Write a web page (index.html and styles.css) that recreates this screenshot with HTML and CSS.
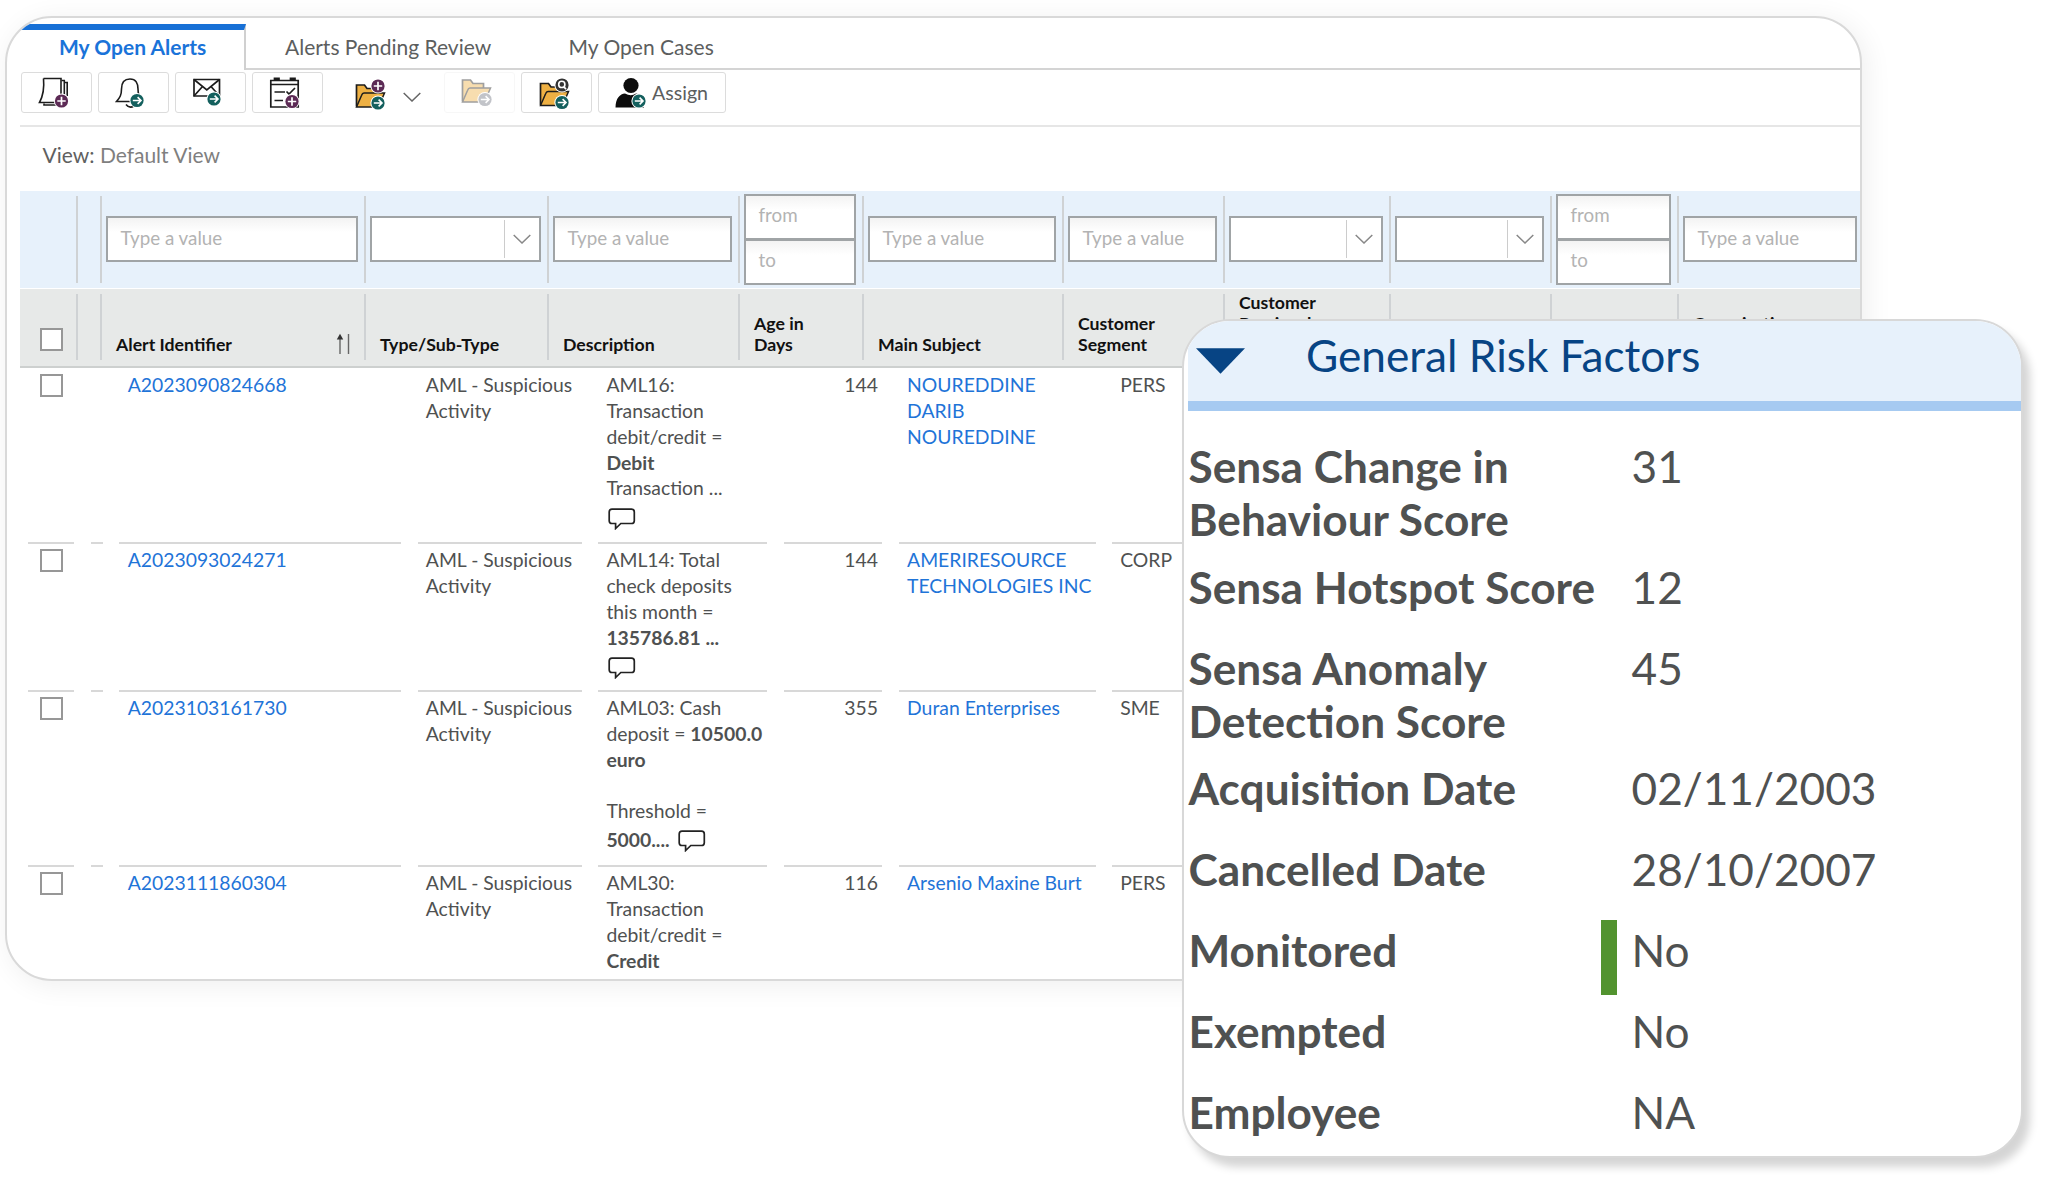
FILE: index.html
```html
<!DOCTYPE html>
<html lang="en">
<head>
<meta charset="utf-8">
<title>My Open Alerts</title>
<link rel="stylesheet" href="styles.css">
</head>
<body>
<svg class="defs" width="0" height="0" aria-hidden="true">
  <defs>
    <g id="badge-plus"><circle r="7.6" fill="#fff"/><circle r="6.6" fill="#5c2a55"/><path d="M-4.2 0H4.2M0-4.2V4.2" stroke="#fff" stroke-width="1.7"/></g>
    <g id="badge-arrow"><circle r="7.6" fill="#fff"/><circle r="6.6" fill="#14605e"/><path d="M-4.2 0H3.8M.6-3.4 4 0 .6 3.4" fill="none" stroke="#fff" stroke-width="1.6"/></g>
    <g id="badge-search"><circle r="7.6" fill="#fff"/><circle r="6.6" fill="#333"/><circle cx="-.2" cy="-.6" r="3.1" fill="none" stroke="#fff" stroke-width="1.6"/><path d="M1.8 1.6 4 4.2" stroke="#fff" stroke-width="1.7"/></g>
    <g id="folder"><path d="M1.5 23.5V2H9.5l2.5 3.5H22.5V10" fill="#eeb043" stroke="#1c1c1c" stroke-width="1.7"/><path d="M1.5 24 6.5 12.5C7 11 7.5 10 9 10H29.5L23.5 24Z" fill="#eeb043" stroke="#1c1c1c" stroke-width="1.5"/></g>
    <g id="bubble"><path d="M4 1.2H23.5Q26.3 1.2 26.3 4V12.7Q26.3 15.5 23.5 15.5H12.8L7.6 20.5V15.5H4Q1.2 15.5 1.2 12.7V4Q1.2 1.2 4 1.2Z" fill="#fff" stroke="#222" stroke-width="1.7"/></g>
  </defs>
</svg>

<main class="card">
  <nav class="tabs">
    <a class="tab tab-active">My Open Alerts</a>
    <a class="tab tab-review">Alerts Pending Review</a>
    <a class="tab tab-cases">My Open Cases</a>
  </nav>

  <div class="toolbar">
    <button class="tool"><svg class="ico" viewBox="0 0 34 34"><g fill="none" stroke="#1c1c1c" stroke-width="1.6"><path d="M5.5 2.5H23V22M5.5 2.5C6.5 13 5 20 1.5 26.5H17"/><path d="M23.5 4.5H26.3V19M26.5 6.5H29.2V20M6 27.5V29H18"/></g><use href="#badge-plus" x="23.5" y="25"/></svg></button>
    <button class="tool"><svg class="ico" viewBox="0 0 34 34"><g fill="none" stroke="#1c1c1c" stroke-width="1.6"><path d="M15 3C9 3 6.5 7.5 6.5 13 6.5 19 5 21.5 1.5 25.5H27C23.5 21 23 18 23 13 23 7.5 21 3 15 3Z"/><path d="M11 28.5Q14.5 33 19 30"/></g><use href="#badge-arrow" x="22" y="24.5"/></svg></button>
    <button class="tool"><svg class="ico" viewBox="0 0 34 34"><g fill="none" stroke="#1c1c1c" stroke-width="1.7"><path d="M2 3.5H27.5V20H2Z"/><path d="M2 3.5 14.8 14 27.5 3.5M2 20 10.5 10.5M27.5 20 19 10.5"/></g><use href="#badge-arrow" x="22" y="23"/></svg></button>
    <button class="tool"><svg class="ico" viewBox="0 0 34 34"><g fill="none" stroke="#1c1c1c" stroke-width="1.7"><path d="M1.8 4.5H29.2V31H1.8ZM1.8 8.5H29.2"/><path d="M5.5 4.5V2.3H10V4.5M21.5 4.5V2.3H26V4.5" fill="#1c1c1c"/><path d="M5.5 16H16M5.5 24.5H14M17.5 15.5 20 18 26 12"/></g><use href="#badge-plus" x="23" y="25.5"/></svg></button>
    <button class="tool tool-split"><svg class="ico" viewBox="0 0 34 34"><use href="#folder" x="1" y="7"/><use href="#badge-plus" x="24" y="10"/><use href="#badge-arrow" x="24" y="27"/></svg><svg class="chev" viewBox="0 0 18 10"><path d="M.7 1 9 9 17.3 1" fill="none" stroke="#666" stroke-width="1.5"/></svg></button>
    <button class="tool tool-off"><svg class="ico" viewBox="0 0 34 34"><use href="#folder" x="0" y="2"/><circle cx="24" cy="23.5" r="7.6" fill="#fff"/><circle cx="24" cy="23.5" r="6.6" fill="#6f7480"/><path d="M19.8 23.5H27.8M24.6 20.1 28 23.5 24.6 26.9" fill="none" stroke="#fff" stroke-width="1.6"/></svg></button>
    <button class="tool"><svg class="ico" viewBox="0 0 34 34"><use href="#folder" x="1" y="5.5"/><use href="#badge-search" x="24" y="9"/><use href="#badge-arrow" x="24" y="26.5"/></svg></button>
    <button class="tool tool-assign"><svg class="ico" viewBox="0 0 34 34"><circle cx="17" cy="9.5" r="7.6" fill="#0c0c0c"/><path d="M1.5 31.5C1.5 22 6 18 11 17.5Q17 21 22 17.5C27 18 30 23 30 31.5Z" fill="#0c0c0c"/><use href="#badge-arrow" x="25" y="25"/></svg><span class="tool-label">Assign</span></button>
  </div>

  <div class="viewbar"><span class="view-key">View:</span> Default View</div>

  <div class="grid">
    <div class="cols filters">
      <div class="cell"></div><div class="cell"></div>
      <div class="cell"><div class="field">Type a value</div></div>
      <div class="cell"><div class="pick"><svg class="chev" viewBox="0 0 18 10"><path d="M.7 1 9 9 17.3 1" fill="none" stroke="#888" stroke-width="1.5"/></svg></div></div>
      <div class="cell"><div class="field">Type a value</div></div>
      <div class="cell range"><div class="field">from</div><div class="field">to</div></div>
      <div class="cell"><div class="field">Type a value</div></div>
      <div class="cell"><div class="field">Type a value</div></div>
      <div class="cell"><div class="pick"><svg class="chev" viewBox="0 0 18 10"><path d="M.7 1 9 9 17.3 1" fill="none" stroke="#888" stroke-width="1.5"/></svg></div></div>
      <div class="cell"><div class="pick"><svg class="chev" viewBox="0 0 18 10"><path d="M.7 1 9 9 17.3 1" fill="none" stroke="#888" stroke-width="1.5"/></svg></div></div>
      <div class="cell range"><div class="field">from</div><div class="field">to</div></div>
      <div class="cell"><div class="field">Type a value</div></div>
    </div>
    <div class="cols heads">
      <div class="cell"><i class="box"></i></div><div class="cell"></div>
      <div class="cell sorted">Alert Identifier<svg class="sort" viewBox="0 0 14 22"><path d="M4 21V4M12.5 1V21" fill="none" stroke="#666" stroke-width="1.4"/><path d="M.8 6.5 4 .8 7.2 6.5Z" fill="#333"/></svg></div>
      <div class="cell">Type/Sub-Type</div>
      <div class="cell">Description</div>
      <div class="cell">Age in<br>Days</div>
      <div class="cell">Main Subject</div>
      <div class="cell">Customer<br>Segment</div>
      <div class="cell">Customer<br>Previously<br>Alerted</div>
      <div class="cell"></div>
      <div class="cell"></div>
      <div class="cell">Organisation<br>Unit</div>
    </div>

    <div class="row r1">
      <div><i class="box"></i></div><div></div>
      <div class="link">A2023090824668</div>
      <div>AML - Suspicious<br>Activity</div>
      <div>AML16:<br>Transaction<br>debit/credit =<br><b>Debit</b><br>Transaction ...<svg class="bubble below" viewBox="0 0 28 22"><use href="#bubble"/></svg></div>
      <div class="num">144</div>
      <div class="link">NOUREDDINE<br>DARIB<br>NOUREDDINE</div>
      <div>PERS</div>
    </div>
    <div class="row r2">
      <div><i class="box"></i></div><div></div>
      <div class="link">A2023093024271</div>
      <div>AML - Suspicious<br>Activity</div>
      <div>AML14: Total<br>check deposits<br>this month =<br><b>135786.81 ...</b><svg class="bubble below" viewBox="0 0 28 22"><use href="#bubble"/></svg></div>
      <div class="num">144</div>
      <div class="link">AMERIRESOURCE<br>TECHNOLOGIES INC</div>
      <div>CORP</div>
    </div>
    <div class="row r3">
      <div><i class="box"></i></div><div></div>
      <div class="link">A2023103161730</div>
      <div>AML - Suspicious<br>Activity</div>
      <div>AML03: Cash<br>deposit = <b>10500.0<br>euro</b><br><br>Threshold =<div class="tail"><b>5000....</b><svg class="bubble" viewBox="0 0 28 22"><use href="#bubble"/></svg></div></div>
      <div class="num">355</div>
      <div class="link">Duran Enterprises</div>
      <div>SME</div>
    </div>
    <div class="row r4">
      <div><i class="box"></i></div><div></div>
      <div class="link">A2023111860304</div>
      <div>AML - Suspicious<br>Activity</div>
      <div>AML30:<br>Transaction<br>debit/credit =<br><b>Credit</b></div>
      <div class="num">116</div>
      <div class="link">Arsenio Maxine Burt</div>
      <div>PERS</div>
    </div>
  </div>
</main>

<aside class="panel">
  <header class="panel-head"><svg class="tri" viewBox="0 0 50 26"><path d="M0 0H50L25 26Z" fill="#074484"/></svg><h2>General Risk Factors</h2></header>
  <dl class="facts">
    <dt>Sensa Change in<br>Behaviour Score</dt><dd>31</dd>
    <dt>Sensa Hotspot Score</dt><dd>12</dd>
    <dt>Sensa Anomaly<br>Detection Score</dt><dd>45</dd>
    <dt>Acquisition Date</dt><dd>02/11/2003</dd>
    <dt>Cancelled Date</dt><dd>28/10/2007</dd>
    <dt>Monitored</dt><dd class="flag">No</dd>
    <dt>Exempted</dt><dd>No</dd>
    <dt>Employee</dt><dd>NA</dd>
  </dl>
</aside>
</body>
</html>
```
FILE: styles.css
```css
* { box-sizing: border-box; }

body {
  margin: 0;
  width: 2048px;
  height: 1183px;
  overflow: hidden;
  position: relative;
  background: #fff;
  font-family: Lato, Carlito, "Noto Sans", sans-serif;
  color: #4f5151;
}

.defs { position: absolute; }

.card {
  width: 1857px;
  height: 965px;
  margin: 16px 0 0 5px;
  border: 2px solid #d9d9d9;
  border-radius: 47px;
  background: #fff;
  overflow: hidden;
  box-shadow: 4px 4px 28px rgba(0, 0, 0, .07);
  padding: 6px 0 0 13px;
}

.tabs { display: flex; height: 46px; margin-left: -13px; font-size: 21px; line-height: 40px; color: #5c5e5e; }
.tab { border-bottom: 2px solid #d4d4d4; padding-top: 3px; }
.tab-active {
  width: 239px;
  padding: 0 0 0 52px;
  border-top: 6px solid #1770d6;
  border-right: 2px solid #d0d0d0;
  border-bottom: 0;
  color: #1a73d9;
  font-weight: 700;
  line-height: 34px;
}
.tab-review { width: 283px; padding-left: 39px; }
.tab-cases { flex: 1; padding-left: 39.5px; }

.toolbar {
  display: flex;
  gap: 6px;
  height: 57px;
  padding: 2px 0 0 .5px;
  border-bottom: 2px solid #e6e6e6;
}
.tool {
  display: flex;
  width: 71px;
  height: 41px;
  padding: 3px 0 0 16px;
  border: 1.5px solid #dcdcdc;
  border-radius: 3px;
  background: #fff;
  font: inherit;
  color: inherit;
}
.ico { width: 34px; height: 34px; flex: none; }
.tool-split { width: 109.5px; padding-left: 24px; border-color: transparent; }
.tool-split .chev { margin: 16px 0 0 15px; }
.tool-off { opacity: .42; border-color: #eee; }
.tool-assign { width: 127.5px; padding-left: 15px; }
.tool-label { font-size: 19.6px; line-height: 33px; margin-left: 4px; color: #5c5e5e; }
.chev { width: 18px; height: 10px; flex: none; }

.viewbar { height: 64px; padding: 13px 0 0 22.5px; font-size: 21px; line-height: 30px; color: #7f7f7f; }
.view-key { color: #606060; }

.cols {
  display: grid;
  grid-template-columns: 58px 24px 264px 183px 191px 124px 200px 161px 166px 161px 127px 180px;
}
.cell { border-right: 2px solid #cfd2d4; }
.cell:last-child { border-right: 0; }

.filters { height: 97px; padding: 5px 0; background: #e7f1fb; }
.filters .cell { padding: 20px 6px 0 4px; }
.filters .cell:last-child { padding-right: 2px; }
.filters .range {
  position: relative;
  margin: -2px 0 -4px;
  padding: 0 8px 0 4px;
  border-right: 0;
}
.filters .range::after {
  content: "";
  position: absolute;
  right: 0; top: 2px; bottom: 4px;
  border-right: 2px solid #cfd2d4;
}
.field, .pick { height: 46px; border: 2px solid #a0a4a6; background: #fff; }
.field {
  padding-left: 12.5px;
  font-size: 18.8px;
  line-height: 40px;
  color: #b3b3b3;
  background: linear-gradient(#f3f3f3, #fff 14px);
}
.field + .field { margin-top: -1px; }
.range .field { line-height: 38px; }
.pick { display: flex; justify-content: flex-end; padding: 2px 8px 2px 0; }
.pick .chev { margin: 14px 0 0 8px; }
.pick::before { content: ""; border-left: 1.5px solid #ccc; }

.heads {
  grid-template-rows: 66px;
  height: 79px;
  margin-top: 1px;
  padding: 5px 0 6px;
  background: #e7e9e8;
  border-bottom: 2px solid #cdd0cf;
  color: #111;
  font-size: 17.7px;
  font-weight: 700;
  line-height: 20.8px;
}
.heads .cell { display: flex; align-items: flex-end; padding: 0 8px 4.6px 14px; white-space: nowrap; }
.heads .cell:first-child { padding: 0 0 9px 20px; }
.heads .sorted { justify-content: space-between; }
.sort { width: 14px; height: 22px; margin-right: 6px; }
.box { display: block; width: 23px; height: 23px; border: 2px solid #979797; background: #fff; }

.row {
  display: grid;
  grid-template-columns: 46px 12px 282px 164px 169px 98px 197px 110px;
  column-gap: 16.6px;
  margin-left: 8px;
  font-size: 19.35px;
  line-height: 25.85px;
}
.row > div { padding: 3px 0 0 8px; border-bottom: 2px solid #d8d8d8; white-space: nowrap; }
.row > div:first-child { padding: 5px 0 0 11.5px; }
.row > .num { text-align: right; padding-right: 4px; }
.r1 { height: 176px; }
.r1 > div { padding-top: 4px; }
.r1 > div:first-child { padding-top: 6px; }
.r2 { height: 148px; }
.r3 { height: 175px; }
.r4 { height: 140px; }
.row > .link { padding-left: 8.5px; color: #1f74d8; }
.bubble { width: 28px; height: 22px; }
.below { display: block; margin: 6.5px 0 0 2px; }
.tail { display: flex; padding-top: 3px; }
.tail .bubble { margin: 3px 0 0 8px; }

.panel {
  position: absolute;
  left: 1182px;
  top: 319px;
  width: 841px;
  height: 839px;
  padding-left: 4px;
  border: 2px solid #d8d8d8;
  border-radius: 48px;
  background: #fff;
  overflow: hidden;
  box-shadow: 7px 9px 8px rgba(0, 0, 0, .17);
}
.panel-head {
  display: flex;
  height: 90px;
  background: #e7f1fb;
  border-bottom: 10px solid #a6caf1;
}
.tri { width: 49px; height: 26px; margin: 27px 0 0 8px; }
h2 { margin: 6px 0 0 61px; font-size: 44.2px; line-height: 56px; font-weight: 400; color: #074484; }

.facts {
  display: grid;
  grid-template-columns: 427px 1fr;
  margin: 28px 0 0 .5px;
  font-size: 44.2px;
  line-height: 53px;
}
.facts dt { font-weight: 700; min-height: 81px; padding-bottom: 14.5px; white-space: nowrap; }
.facts dd { margin: 0 0 0 16px; position: relative; }
.flag::before {
  content: "";
  position: absolute;
  left: -31px; top: -3px;
  width: 16px; height: 75px;
  background: #52932f;
}
```
